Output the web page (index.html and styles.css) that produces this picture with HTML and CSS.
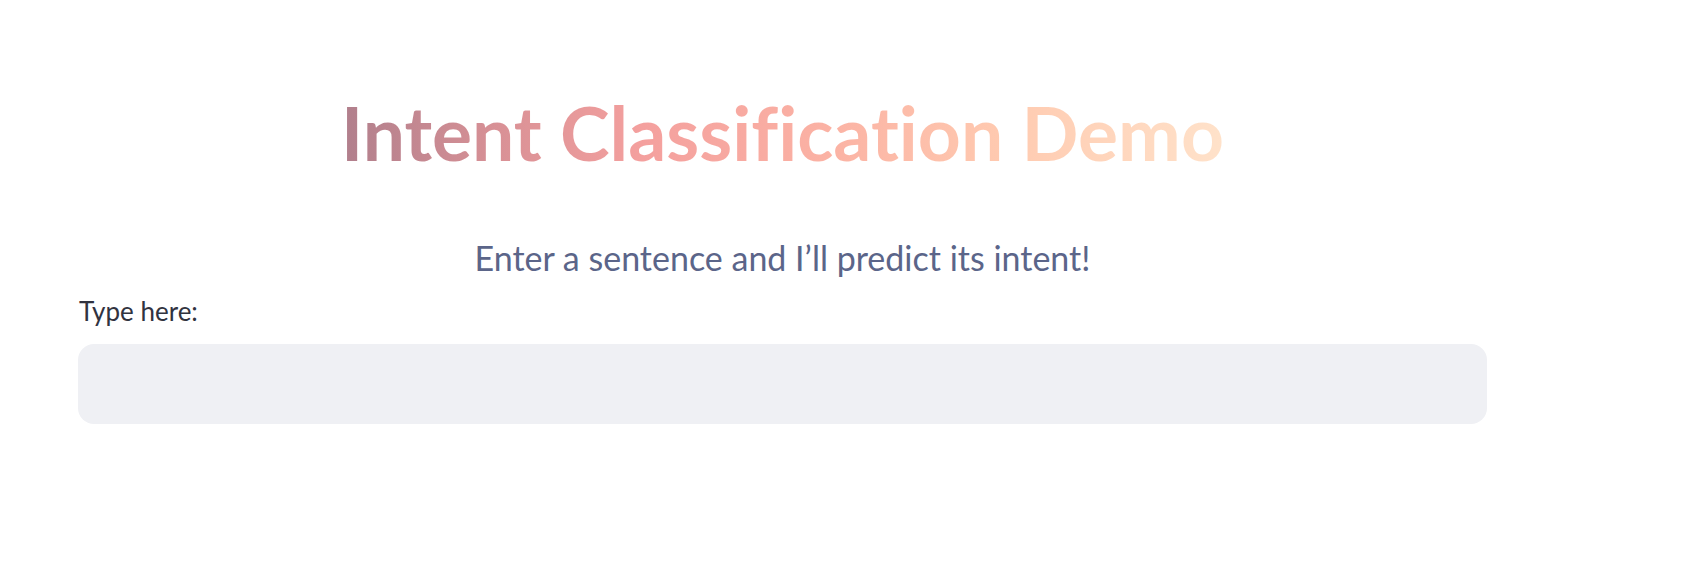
FILE: index.html
```html
<!DOCTYPE html>
<html lang="en">
<head>
<meta charset="utf-8">
<title>Intent Classification Demo</title>
<link rel="stylesheet" href="styles.css">
</head>
<body>
<main class="app">
  <h1 class="title">Intent Classification Demo</h1>
  <p class="subtitle">Enter a sentence and I’ll predict its intent!</p>
  <label class="field" for="q">
    <span class="field-label">Type here:</span>
    <input id="q" class="field-input" type="text">
  </label>
</main>
</body>
</html>
```
FILE: styles.css
```css
html, body {
  margin: 0;
  padding: 0;
  background: #ffffff;
}
body {
  font-family: "Lato", "Open Sans", sans-serif;
  color: #31333f;
  font-variant-ligatures: none;
}
.app {
  box-sizing: border-box;
  width: 1409px;
  margin-left: 78px;
  padding-top: 87px;
  display: flex;
  flex-direction: column;
}
.title {
  margin: 0;
  align-self: center;
  font-size: 75px;
  font-weight: 700;
  line-height: 1.2;
  font-variant-ligatures: none;
  background: linear-gradient(90deg, #b07f8c 0%, #d99196 18%, #f4a09e 34%, #fbb2a4 55%, #ffcab0 75%, #ffe2ca 100%);
  -webkit-background-clip: text;
  background-clip: text;
  color: transparent;
}
.subtitle {
  margin: 61px 0 0;
  text-align: center;
  font-size: 34px;
  line-height: 1.2;
  color: #5b6589;
}
.field {
  display: flex;
  flex-direction: column;
  margin-top: 17px;
}
.field-label {
  font-size: 26px;
  line-height: 1.2;
  color: #31333f;
  padding-left: 1px;
}
.field-input {
  margin-top: 17px;
  box-sizing: border-box;
  height: 80px;
  width: 100%;
  border: none;
  outline: none;
  border-radius: 16px;
  background: #eff0f4;
  padding: 0 24px;
  font-family: inherit;
  font-size: 28px;
  color: #31333f;
}
```
